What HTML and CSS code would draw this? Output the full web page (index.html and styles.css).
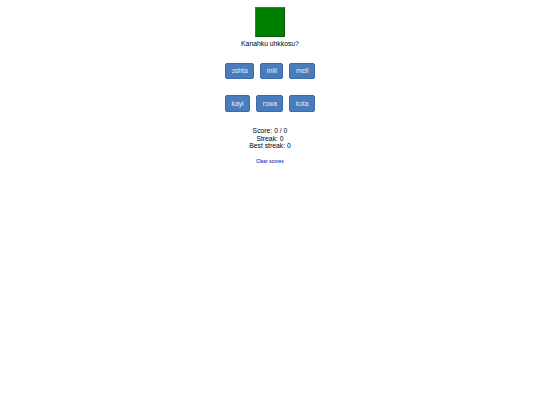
FILE: index.html
```html
<!DOCTYPE html>
<html>
<head>
<meta charset="utf-8">
<link rel="stylesheet" href="styles.css">
</head>
<body>
<main class="quiz">
  <div class="swatch"></div>
  <p class="question">Kanahku uhkkosu?</p>
  <div class="choices">
    <button class="choice">ɔshta</button>
    <button class="choice">mili</button>
    <button class="choice">meli</button>
  </div>
  <div class="choices second">
    <button class="choice">kayi</button>
    <button class="choice">rɔwa</button>
    <button class="choice">kɔta</button>
  </div>
  <div class="scores">
    <div>Score: 0 / 0</div>
    <div>Streak: 0</div>
    <div>Best streak: 0</div>
  </div>
  <a class="clear" href="#">Clear scores</a>
</main>
</body>
</html>
```
FILE: styles.css
```css
html, body {
  margin: 0;
  padding: 0;
  background: #ffffff;
}
body {
  font-family: "Liberation Sans", Arial, sans-serif;
  color: #000;
}
.quiz {
  display: flex;
  flex-direction: column;
  align-items: center;
}
.swatch {
  margin-top: 7px;
  width: 30px;
  height: 30px;
  box-sizing: border-box;
  background: #008000;
  border: 1px solid #2f8a2f;
  border-bottom-color: #0a5a0a;
  border-right-color: #0a5a0a;
}
.question {
  margin: 3px 0 0;
  font-size: 6.8px;
  line-height: 8px;
}
.choices {
  margin-top: 15px;
  display: flex;
  gap: 6px;
}
.choices.second {
  margin-top: 16px;
}
.choice {
  height: 16px;
  box-sizing: border-box;
  padding: 0 5.5px;
  border: 1px solid #3e6aa6;
  border-radius: 2px;
  background: #4a7cbd;
  color: #e6edf6;
  font-family: "Liberation Sans", Arial, sans-serif;
  font-size: 6.8px;
  line-height: 14px;
  cursor: pointer;
}
.choices.second .choice {
  height: 17px;
  line-height: 15px;
}
.scores {
  margin-top: 15px;
  font-size: 6.8px;
  line-height: 7.6px;
  text-align: center;
}
.clear {
  margin-top: 9px;
  font-size: 4.6px;
  line-height: 6px;
  font-weight: bold;
  color: #3b3bcc;
  text-decoration: none;
}
```
